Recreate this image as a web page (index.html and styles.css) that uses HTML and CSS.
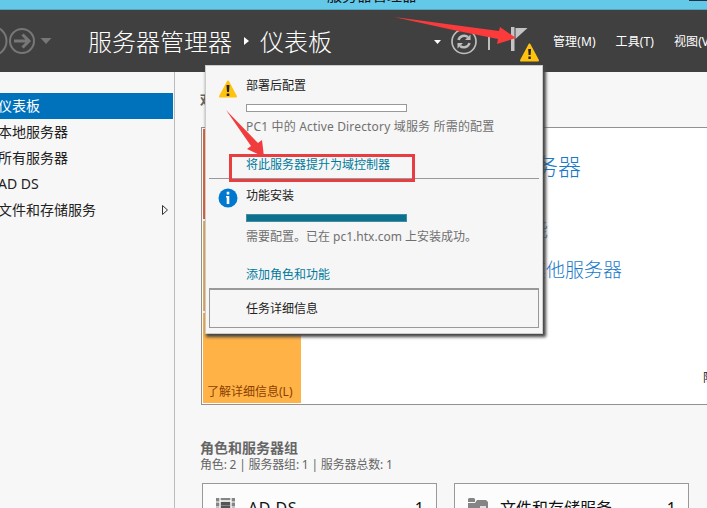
FILE: index.html
```html
<!DOCTYPE html>
<html lang="zh-CN">
<head>
<meta charset="utf-8">
<title>服务器管理器</title>
<link rel="stylesheet" href="styles.css">
</head>
<body>
<div class="window">
  <div class="titlebar"><span class="window-title">服务器管理器</span><span class="window-button"></span></div>
  <header class="toolbar">
    <svg class="nav-icons" width="56" height="62" viewBox="0 0 56 62" fill="none" stroke="#777">
      <circle cx="-8" cy="31" r="14.5" stroke-width="2"/>
      <circle cx="22" cy="31" r="12" stroke-width="2"/>
      <path d="M14 31h14M22.500 24.500l6.500 6.500-6.500 6.500" stroke-width="3"/>
      <path d="M40.500 28h11l-5.500 6z" fill="#777" stroke="none"/>
    </svg>
    <h1 class="crumbs"><span>服务器管理器</span><i class="crumb-arrow"></i><span>仪表板</span></h1>
    <svg class="tool-icons" width="112" height="62" viewBox="0 0 112 62" fill="none" stroke="#bdbdbd">
      <path d="M4 30h7l-3.500 4z" fill="#fff" stroke="none"/>
      <circle cx="34" cy="31.500" r="12" stroke-width="1.700"/>
      <path d="M28.500 30a6 6 0 0 1 9.500-3M39.500 33a6 6 0 0 1-9.500 3" stroke-width="2.500"/>
      <path d="M35 30h5.500v-5.500zM33 33h-5.500v5.500z" fill="#bdbdbd" stroke="none"/>
      <path d="M59 22v18" stroke-width="2"/>
      <path d="M81 17h3.500v24H81zM85.500 18h12L85.500 29z" fill="#c4c4c4" stroke="none"/>
      <path d="M99.500 34.500l-8.500 16h17z" fill="#ffc20e" stroke="#ffc20e" stroke-width="2" stroke-linejoin="round"/>
      <path d="M98.200 39h2.800l-.4 6h-2zM98.400 46.500h2.400v2.500h-2.400z" fill="#222" stroke="none"/>
    </svg>
    <nav class="menu"><span>管理(M)</span><span>工具(T)</span><span>视图(V)</span></nav>
  </header>
  <div class="body">
    <aside class="sidebar">
      <div class="side-item active">仪表板</div>
      <div class="side-item">本地服务器</div>
      <div class="side-item">所有服务器</div>
      <div class="side-item">AD DS</div>
      <div class="side-item">文件和存储服务<svg width="8" height="12" viewBox="0 0 8 12"><path d="M1.500 2.500l5 4.500-5 4.500z" fill="none" stroke="#333"/></svg></div>
    </aside>
    <main class="content">
      <h2 class="welcome-title">欢迎使用服务器管理器</h2>
      <section class="welcome">
        <div class="tiles">
          <div class="tile quick"></div>
          <div class="tile news"></div>
          <div class="tile learn">了解详细信息(L)</div>
        </div>
        <div class="steps">
          <span class="step main-step">配置此本地服务器</span>
          <span class="step second-step">添加角色和功能</span>
          <span class="step third-step">添加要管理的其他服务器</span>
          <span class="hide">隐藏</span>
        </div>
      </section>
      <h2 class="groups-title">角色和服务器组</h2>
      <p class="groups-count">角色: 2 | 服务器组: 1 | 服务器总数: 1</p>
      <div class="cards">
        <div class="card">
          <svg width="20" height="20" viewBox="0 0 20 20"><path d="M0 0h19v20H0z" fill="#858585"/><path d="M4 0v20M15 0v20M4 3h11M4 12h11" stroke="#fff" stroke-width="1.300"/><path d="M0 4h4M0 9h4M15 4h4M15 9h4" stroke="#fff"/><path d="M5 4h9v3H5zM5 8h9v3H5z" fill="#555"/></svg>
          <span class="latin">AD DS</span><b>1</b>
        </div>
        <div class="card">
          <svg width="20" height="20" viewBox="0 0 20 20"><path d="M0 1l1-1h5l1 1v3H0zM0 5h7l2-3h9l2 2v16H0z" fill="#858585"/><path d="M10 20v-9h10M12 9h6" fill="none" stroke="#fff" stroke-width="1.300"/></svg>
          <span>文件和存储服务</span><b>1</b>
        </div>
      </div>
    </main>
  </div>
</div>
<div class="popup">
  <section class="task first-task">
    <svg class="task-icon" width="20" height="20" viewBox="0 0 20 20"><path d="M10 2.500L2 17.500h16z" fill="#ffc20e" stroke="#ffc20e" stroke-width="2" stroke-linejoin="round"/><path d="M8.500 6h3l-.5 7H9zM8.700 14.500h2.600V17H8.700z" fill="#222"/></svg>
    <div class="task-text">
      <div class="task-name">部署后配置</div>
      <div class="progress"></div>
      <div class="task-note wide">PC1 中的 Active Directory 域服务 所需的配置</div>
      <div class="task-link">将此服务器提升为域控制器</div>
    </div>
  </section>
  <section class="task second-task">
    <svg class="task-icon" width="20" height="20" viewBox="0 0 20 20"><circle cx="10" cy="10" r="9.500" fill="#0078d0"/><path d="M8.700 3.800h2.600v2.600H8.700zM8 8h3.300v8H8.700V9.500H8z" fill="#fff"/></svg>
    <div class="task-text">
      <div class="task-name">功能安装</div>
      <div class="progress full"></div>
      <div class="task-note">需要配置。已在 pc1.htx.com 上安装成功。</div>
      <div class="task-link">添加角色和功能</div>
    </div>
  </section>
  <div class="details">任务详细信息</div>
</div>
<svg class="marks" width="707" height="508" viewBox="0 0 707 508">
  <path d="M394 17L499 31l1-4 16 11-19 6 1-5-40-8z" fill="#fb3b3b"/>
  <path d="M226 110l32 33 4-3 2 17-17-8 4-3z" fill="#f03c3c"/>
  <path d="M230.500 155.500h183v25h-183z" fill="none" stroke="#e83e42" stroke-width="3"/>
</svg>
</body>
</html>
```
FILE: styles.css
```css
* { box-sizing: border-box; }
body {
  margin: 0;
  width: 707px;
  height: 508px;
  overflow: hidden;
  position: relative;
  font: 12px "Noto Sans", "Noto Sans CJK SC", sans-serif;
  background: #f7f7f7;
  color: #222;
  white-space: nowrap;
}
h1, h2, p { margin: 0; font-weight: 400; }
.window { height: 508px; display: flex; flex-direction: column; overflow: hidden; }
.titlebar { height: 10px; flex: none; background: #64c8e8; border-bottom: 1px solid #55a5bd; position: relative; overflow: hidden; }
.window-title { position: absolute; left: 327px; top: -14px; font-size: 15px; line-height: 18px; color: #111; }
.window-button { position: absolute; right: 0; top: 0; width: 18px; height: 1px; background: #234; }
.toolbar { height: 62px; flex: none; display: flex; align-items: center; background: #404040; color: #fff; }
.nav-icons { flex: none; }
.crumbs { width: 374px; flex: none; padding-left: 32px; display: flex; align-items: center; font: 300 24px/36px "Noto Sans CJK SC", sans-serif; }
.crumb-arrow { margin: 0 11px 0 12px; border: solid transparent; border-width: 4px 0 4px 5px; border-left-color: #fff; }
.tool-icons { flex: none; }
.menu { display: flex; gap: 20px; padding-left: 11px; font-size: 12px; letter-spacing: .1px; }
.body { flex: 1; display: flex; min-height: 0; }
.sidebar { width: 175px; flex: none; padding-top: 21px; border-right: 1px solid #bbb; }
.side-item { height: 26px; width: 173px; display: flex; align-items: center; justify-content: space-between; padding: 0 4px 2px 0; font-size: 14px; text-indent: -2px; }
.active { background: #0072bc; color: #fff; }
.content { flex: 1; min-width: 0; padding-left: 26px; overflow: hidden; }
.welcome-title { margin: 18px 0 0 -1px; height: 21px; font-size: 14px; line-height: 20px; font-weight: 700; color: #666; }
.welcome { margin-top: 16px; height: 278px; width: 560px; border: 1px solid #929292; background: #fff; display: flex; padding: 1px; }
.tiles { width: 98px; display: flex; flex-direction: column; gap: 2px; }
.tile { height: 90px; }
.quick { background: #e5653a; }
.news { background: #eab263; }
.learn { background: #ffb347; color: #8a3f00; flex: 1; display: flex; align-items: flex-end; padding: 0 0 3px 4px; }
.steps { flex: 1; position: relative; color: #1979ca; font: 300 19px/28px "Noto Sans CJK SC", sans-serif; }
.step { position: absolute; }
.main-step { right: 178px; top: 22px; font-size: 23px; }
.second-step { right: 211px; top: 86px; }
.third-step { right: 137px; top: 126px; }
.hide { position: absolute; left: 402px; top: 234px; color: #222; font-size: 12px; font-weight: 400; }
.groups-title { margin: 33px 0 0 -1px; font-size: 14px; line-height: 19px; font-weight: 700; color: #666; }
.groups-count { color: #666; line-height: 16px; margin-left: -1px; letter-spacing: -.18px; }
.cards { display: flex; gap: 17px; margin: 10px 0 0 1px; }
.card { width: 235px; flex: none; height: 60px; padding: 14px 12px 0 13px; display: flex; border: 1px solid #999; background: #fcfcfc; font-size: 16px; line-height: 22px; color: #111; }
.card span { margin: -1px 0 0 12px; }
.card .latin { letter-spacing: .5px; }
.card b { margin: -1px 0 0 auto; font-weight: 400; }
.popup { position: absolute; left: 205px; top: 65px; width: 338px; height: 269px; padding: 0 3px; background: #f6f6f6; border: 1px solid #ccc; box-shadow: 2px 2px 3px 1px #444; }
.task { display: flex; padding: 0 9px; }
.first-task { height: 113px; padding-top: 12px; border-bottom: 1px solid #999; }
.second-task { height: 109px; padding-top: 9px; }
.task-icon { margin-top: 1px; flex: none; }
.second-task .task-icon { margin-top: 0; }
.task-text { margin-left: 8px; line-height: 16px; }
.progress { width: 161px; height: 8px; margin-top: 10px; border: 1px solid #999; background: #fff; }
.full { background: #0b718d; border-color: #428da1; }
.task-note { color: #707070; margin-top: 7px; }
.wide { letter-spacing: .17px; }
.task-link { margin-top: 22px; color: #007a9c; }
.details { height: 40px; border: 1px solid #999; border-top-width: 2px; padding-left: 36px; line-height: 37px; }
.marks { position: absolute; left: 0; top: 0; }
```
